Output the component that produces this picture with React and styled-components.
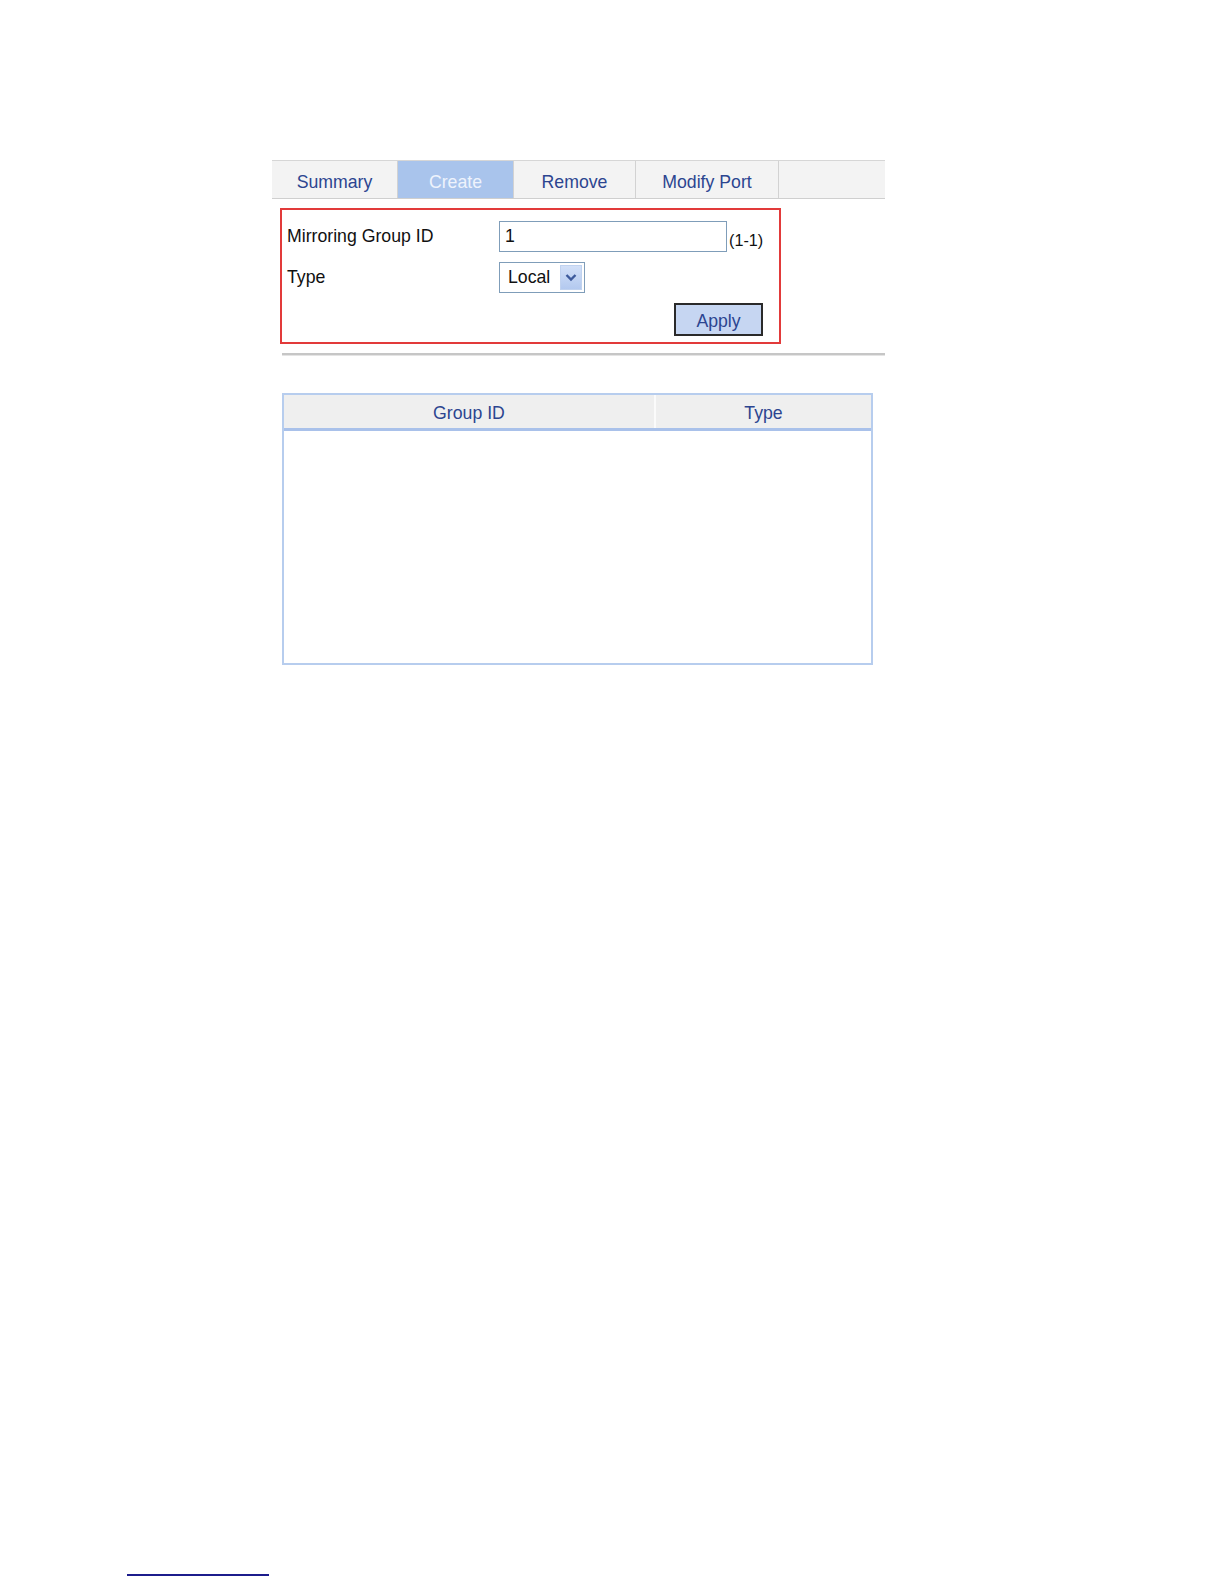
import React from 'react';
import styled, { createGlobalStyle } from 'styled-components';

const GlobalStyle = createGlobalStyle`
  html, body {
    margin: 0;
    padding: 0;
    background: #fff;
  }
  body {
    font-family: 'Liberation Sans', Arial, sans-serif;
  }
`;

const tabs = [
  { label: 'Summary', width: 126 },
  { label: 'Create', width: 116, active: true },
  { label: 'Remove', width: 122 },
  { label: 'Modify Port', width: 143 },
];

function App() {
  return (
    <Page>
      <GlobalStyle />
      <Content>
        <TabBar>
          {tabs.map((t) => (
            <Tab key={t.label} $width={t.width} $active={t.active}>
              {t.label}
            </Tab>
          ))}
          <TabFiller />
        </TabBar>

        <FormBox>
          <FormRow>
            <Label>Mirroring Group ID</Label>
            <TextInput defaultValue="1" />
            <Hint>(1-1)</Hint>
          </FormRow>
          <FormRow>
            <Label>Type</Label>
            <Select>
              <SelectValue>Local</SelectValue>
              <SelectArrow>
                <svg width="12" height="9" viewBox="0 0 12 9">
                  <path
                    d="M1.5 2 L6 6.5 L10.5 2"
                    fill="none"
                    stroke="#3d5a9c"
                    strokeWidth="2.4"
                  />
                </svg>
              </SelectArrow>
            </Select>
          </FormRow>
          <ButtonRow>
            <ApplyButton>Apply</ApplyButton>
          </ButtonRow>
        </FormBox>

        <Separator />

        <Table>
          <HeadRow>
            <HeadCell $width={370}>Group ID</HeadCell>
            <HeadCell>Type</HeadCell>
          </HeadRow>
          <TableBody />
        </Table>
      </Content>

      <FooterLine />
    </Page>
  );
}

const Page = styled.div`
  display: flex;
  flex-direction: column;
  min-height: 1584px;
  box-sizing: border-box;
  padding-top: 160px;
`;
const Content = styled.div`
  margin-left: 272px;
  width: 613px;
  display: flex;
  flex-direction: column;
`;
const TabBar = styled.div`
  display: flex;
  height: 39px;
  box-sizing: border-box;
  border-top: 1px solid #d6d6d6;
  border-bottom: 1px solid #cfcfcf;
  background: #f3f3f3;
`;
const Tab = styled.div`
  width: ${(p) => p.$width}px;
  display: flex;
  align-items: center;
  justify-content: center;
  border-right: 1px solid #d2d2d2;
  background: ${(p) => (p.$active ? '#a9c4ec' : '#f3f3f3')};
  color: ${(p) => (p.$active ? '#eef3fc' : '#2c4590')};
  font-size: 17.7px;
  padding-top: 5px;
  box-sizing: border-box;
`;
const TabFiller = styled.div`
  flex: 1;
`;
const FormBox = styled.div`
  margin: 9px 0 0 8px;
  width: 501px;
  height: 136px;
  box-sizing: border-box;
  border: 2px solid #e23a3a;
  padding: 11px 16px 0 5px;
  display: flex;
  flex-direction: column;
  gap: 10px;
`;
const FormRow = styled.div`
  display: flex;
  align-items: center;
  height: 31px;
`;
const Label = styled.div`
  width: 212px;
  flex-shrink: 0;
  font-size: 17.7px;
  color: #111;
`;
const TextInput = styled.input`
  width: 228px;
  height: 31px;
  flex-shrink: 0;
  box-sizing: border-box;
  border: 1px solid #7f9db9;
  padding: 0 5px;
  font: 17.7px 'Liberation Sans', Arial, sans-serif;
  color: #111;
  outline: none;
`;
const Hint = styled.span`
  font-size: 16.2px;
  color: #111;
  white-space: nowrap;
  margin: 8px 0 0 2px;
`;
const Select = styled.div`
  width: 86px;
  height: 31px;
  box-sizing: border-box;
  border: 1px solid #7f9db9;
  display: flex;
  align-items: center;
  padding: 2px;
  background: #fff;
`;
const SelectValue = styled.span`
  flex: 1;
  font-size: 17.7px;
  color: #111;
  padding-left: 6px;
`;
const SelectArrow = styled.span`
  width: 22px;
  height: 25px;
  display: flex;
  align-items: center;
  justify-content: center;
  background: linear-gradient(#d2e0f8, #b3c9ef);
  border: 1px solid #c0d2ef;
  box-sizing: border-box;
`;
const ButtonRow = styled.div`
  display: flex;
  justify-content: flex-end;
`;
const ApplyButton = styled.button`
  width: 89px;
  height: 33px;
  box-sizing: border-box;
  border: 2px solid #2a2a2a;
  background: #c6d6f2;
  color: #2c4590;
  font: 17.7px 'Liberation Sans', Arial, sans-serif;
  padding-top: 4px;
`;
const Separator = styled.div`
  margin: 9px 0 0 10px;
  height: 2px;
  background: #c6c6c6;
  border-bottom: 1px solid #e4e4e4;
`;
const Table = styled.div`
  margin: 37px 0 0 10px;
  width: 591px;
  height: 272px;
  box-sizing: border-box;
  border: 2px solid #b7cdee;
  display: flex;
  flex-direction: column;
`;
const HeadRow = styled.div`
  display: flex;
  height: 36px;
  box-sizing: border-box;
  background: #efefef;
  border-bottom: 3px solid #a9c1ea;
`;
const HeadCell = styled.div`
  ${(p) => (p.$width ? `width: ${p.$width}px;` : 'flex: 1;')}
  display: flex;
  align-items: center;
  justify-content: center;
  color: #2c4590;
  font-size: 17.7px;
  padding-top: 3px;
  box-sizing: border-box;
  & + & {
    border-left: 2px solid #fbfbfb;
  }
`;
const TableBody = styled.div`
  flex: 1;
  background: #fff;
`;
const FooterLine = styled.div`
  margin: auto 0 8px 127px;
  width: 142px;
  height: 2px;
  background: #1c1c8c;
`;

export default App;
